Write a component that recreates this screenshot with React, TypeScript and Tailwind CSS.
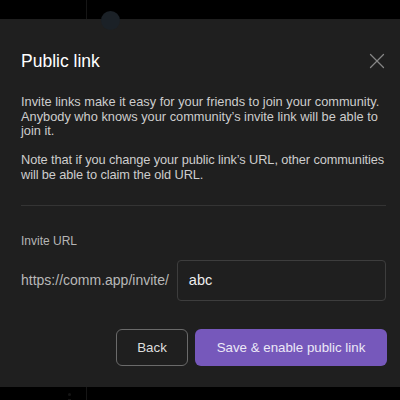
import { X } from 'lucide-react';

export default function App() {
  return (
    <div className="w-[400px] h-[400px] bg-black flex flex-col overflow-hidden font-['Liberation_Sans',Arial,sans-serif]">
      {/* background page peeking through */}
      <div className="h-[19px] relative shrink-0">
        <div className="absolute left-[86px] top-0 h-full w-px bg-[#161616]" />
        <div className="absolute left-[101px] top-[11px] w-[19px] h-[19px] rounded-full bg-[#1b2127]" />
      </div>

      {/* modal */}
      <div className="h-[368px] shrink-0 bg-[#1f1f1f] pl-[21px] pr-[14px] pt-[29px] flex flex-col">
        <div className="flex items-center justify-between">
          <h2 className="text-[17.5px] leading-[24px] text-white">Public link</h2>
          <X className="w-[26px] h-[26px] text-[#858585] -mr-[4px]" strokeWidth={1.2} />
        </div>

        <div className="mt-[21px] w-[366px] text-[12.8px] leading-[14.5px] text-[#cdcdcd]">
          <p>
            Invite links make it easy for your friends to join your community. Anybody who knows your
            community’s invite link will be able to join it.
          </p>
          <p className="mt-[14.5px] w-[378px] tracking-[-0.1px]">
            Note that if you change your public link’s URL, other communities will be able to claim the old
            URL.
          </p>
        </div>

        <div className="mt-[23px] h-px bg-[#343434]" />

        <div className="mt-[28px] text-[12px] leading-[15px] text-[#b5b5b5]">Invite URL</div>

        <div className="mt-[11px] flex items-center gap-[8px]">
          <span className="text-[14px] text-[#b8b8b8] whitespace-nowrap">https://comm.app/invite/</span>
          <div className="flex-1 h-[41px] border border-[#3d3d3d] rounded-[4px] flex items-center px-[11px] text-[14.5px] text-[#eeeeee]">
            abc
          </div>
        </div>

        <div className="mt-[28px] flex justify-end gap-[7px] -mr-[1px]">
          <button className="w-[72px] h-[37px] border border-[#6a6a6a] rounded-[6px] text-[13.3px] text-[#dedede]">
            Back
          </button>
          <button className="w-[192px] h-[37px] bg-[#7658bb] rounded-[6px] text-[13.3px] text-[#ece8f7]">
            Save &amp; enable public link
          </button>
        </div>
      </div>

      <div className="h-[13px] relative shrink-0">
        <div className="absolute left-[68px] top-[6px] w-[3px] h-[3px] rounded-full bg-[#151515]" />
        <div className="absolute left-[68px] top-[12px] w-[3px] h-[1px] bg-[#151515]" />
        <div className="absolute left-[86px] top-0 h-full w-px bg-[#161616]" />
      </div>
    </div>
  );
}
